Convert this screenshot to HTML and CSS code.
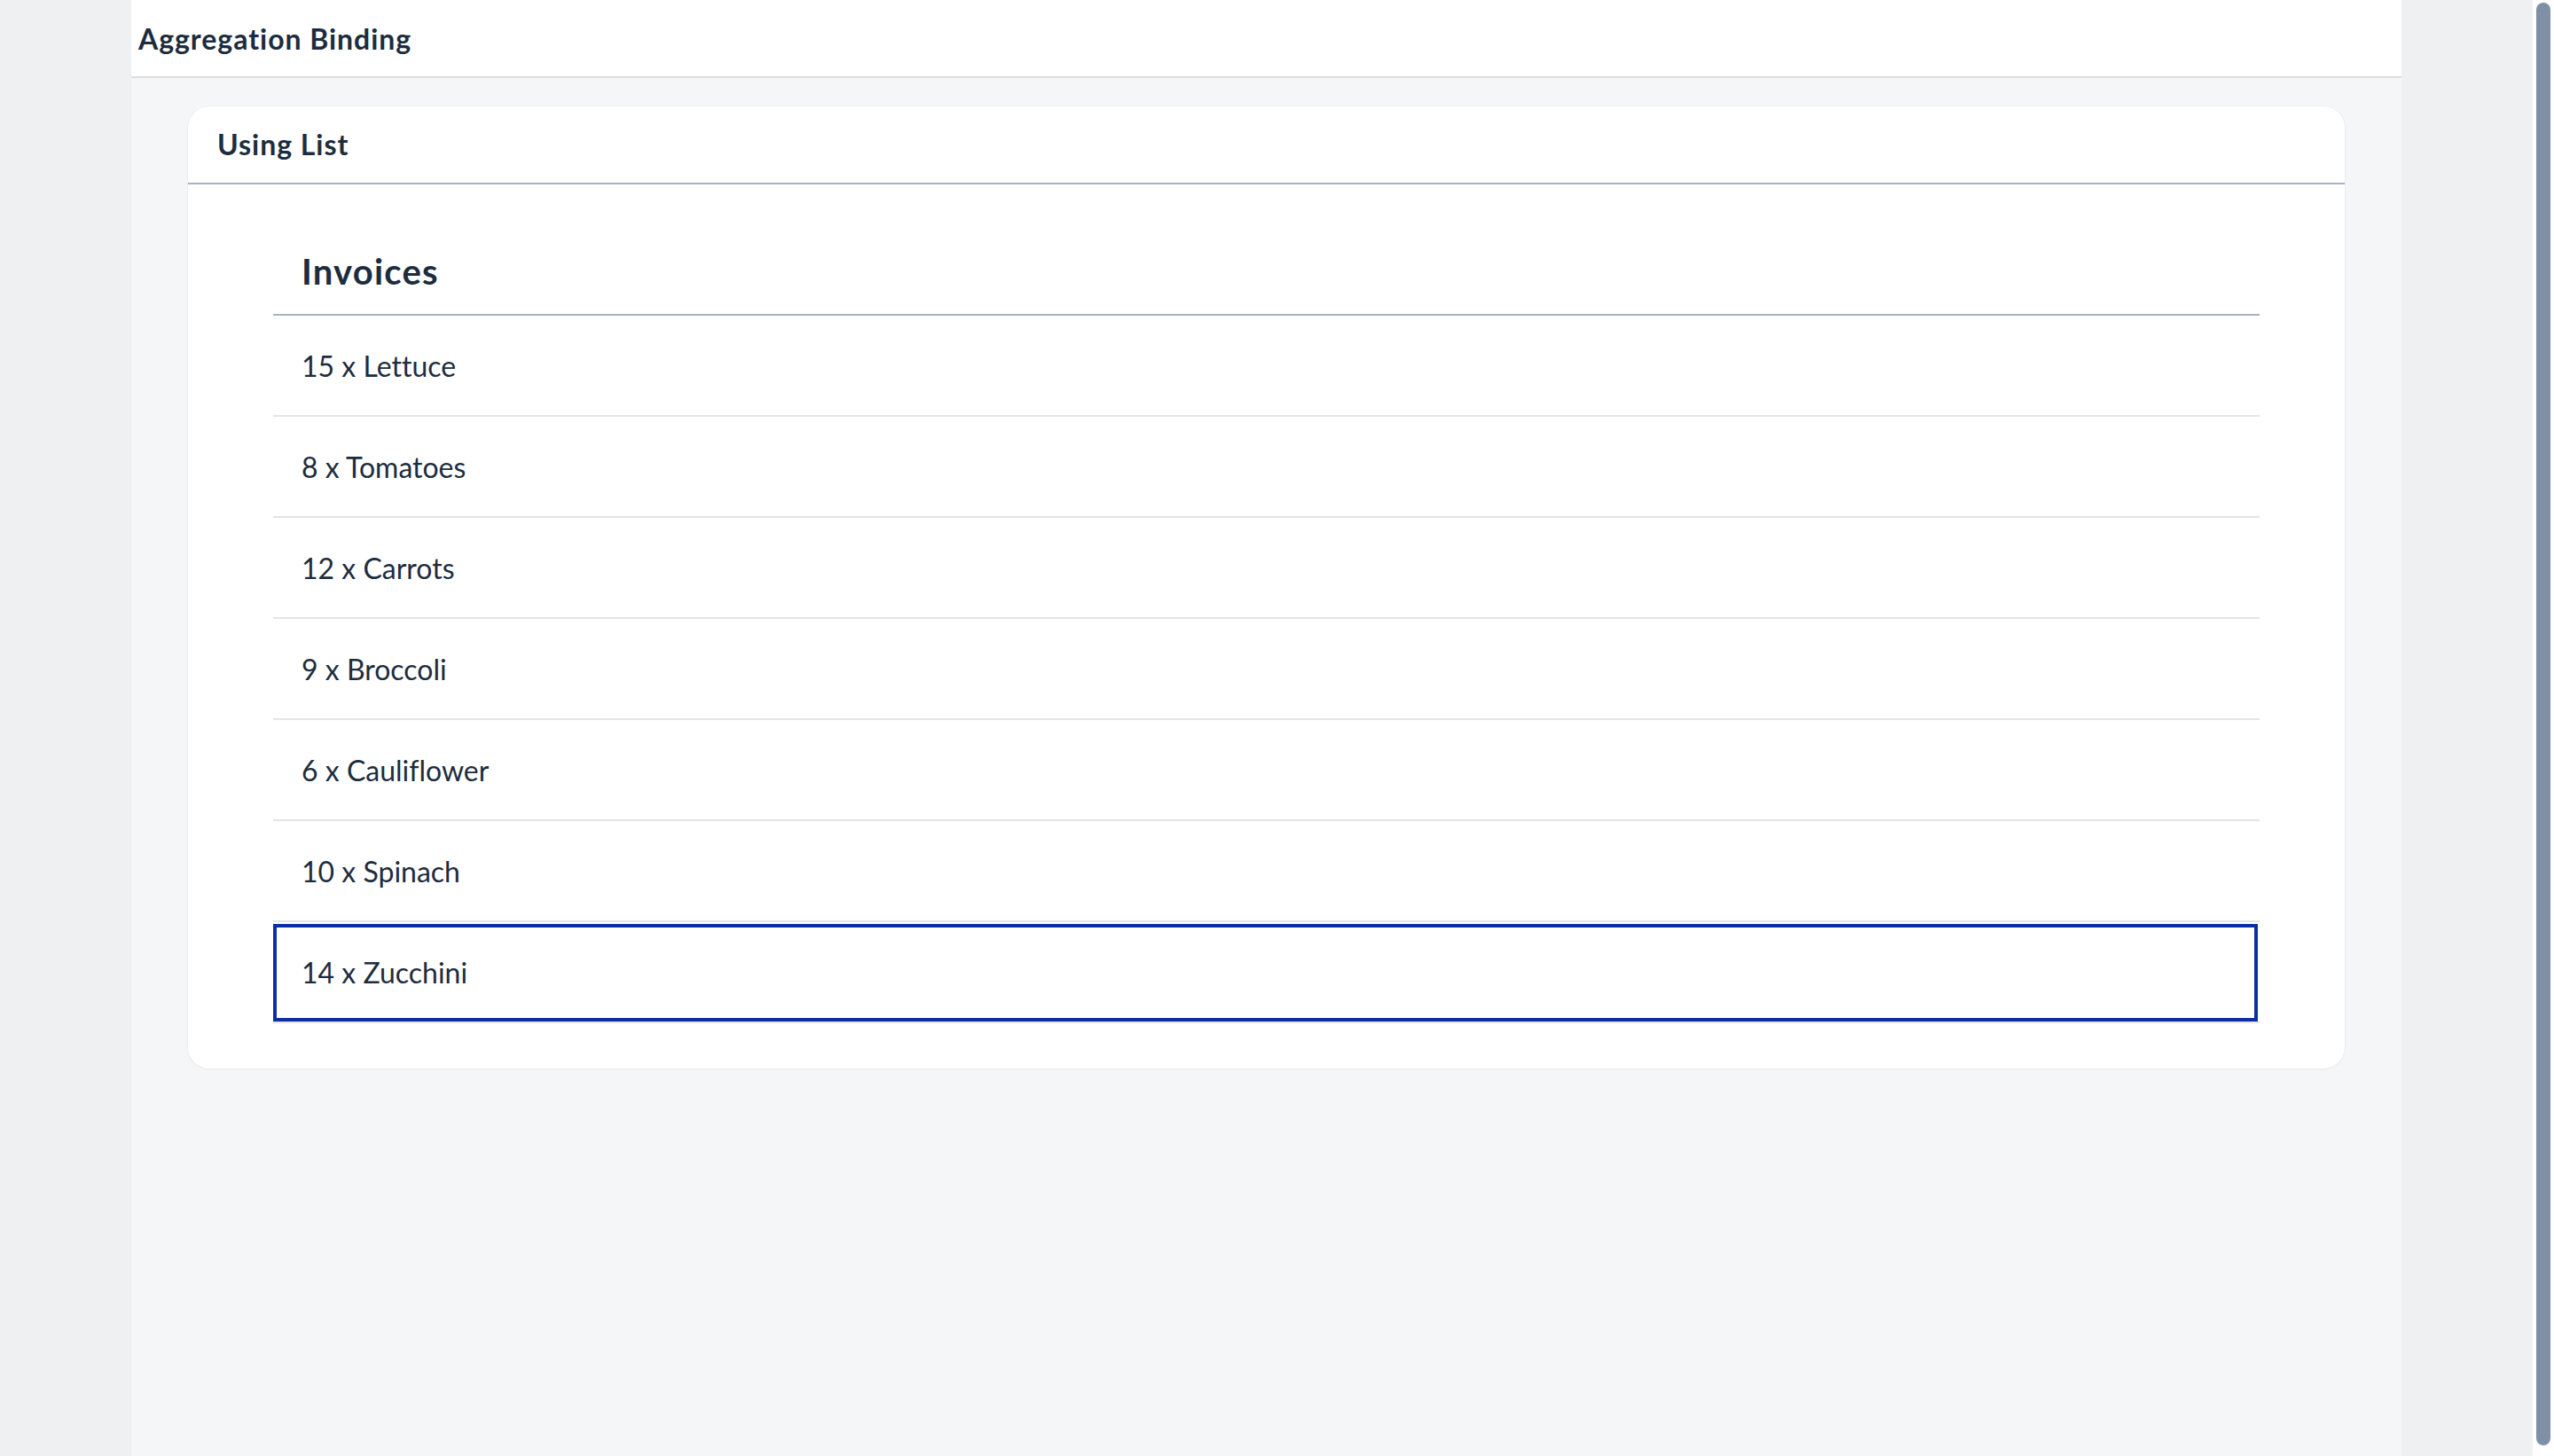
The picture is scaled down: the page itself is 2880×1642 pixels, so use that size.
FILE: index.html
```html
<!DOCTYPE html>
<html lang="en">
<head>
<meta charset="utf-8">
<title>Aggregation Binding</title>
<link rel="stylesheet" href="styles.css">
</head>
<body>
<div class="app">
  <div class="viewport">
    <div class="shell">
      <header class="page-header">
        <h1 class="page-title">Aggregation Binding</h1>
      </header>
      <main class="page-content">
        <section class="panel">
          <div class="panel-header">
            <h2 class="panel-title">Using List</h2>
          </div>
          <div class="panel-body">
            <div class="list">
              <div class="list-header">Invoices</div>
              <ul class="list-items">
                <li class="list-item">15 x Lettuce</li>
                <li class="list-item">8 x Tomatoes</li>
                <li class="list-item">12 x Carrots</li>
                <li class="list-item">9 x Broccoli</li>
                <li class="list-item">6 x Cauliflower</li>
                <li class="list-item">10 x Spinach</li>
                <li class="list-item is-focused">14 x Zucchini</li>
              </ul>
            </div>
          </div>
        </section>
      </main>
    </div>
  </div>
  <div class="scrollbar"><div class="scrollbar-thumb"></div></div>
</div>
</body>
</html>
```

FILE: styles.css
```css
html, body {
  margin: 0;
  height: 100%;
  overflow: hidden;
}
body {
  font-family: Lato, "Liberation Sans", Arial, sans-serif;
  font-variant-ligatures: none;
  color: #1d2d3e;
  background: #eef0f2;
}
.app {
  display: flex;
  height: 1642px;
}
.viewport {
  flex: 1;
  display: flex;
  justify-content: center;
  background: #eef0f2;
}
.scrollbar {
  width: 24px;
  background: #ffffff;
  padding: 3px 4px 12px 4px;
  box-sizing: border-box;
  display: flex;
}
.scrollbar-thumb {
  flex: 1;
  background: #7f8fa6;
  border-radius: 8px;
}
.shell {
  width: 2560px;
  height: 100%;
  background: #f5f6f7;
  display: flex;
  flex-direction: column;
}
.page-header {
  height: 86px;
  background: #ffffff;
  border-bottom: 2px solid #dcdee0;
  display: flex;
  align-items: center;
  padding-left: 8px;
  padding-top: 2px;
  box-sizing: border-box;
  height: 88px;
}
.page-title {
  margin: 0;
  font-size: 32px;
  font-weight: 700;
  line-height: 1;
  letter-spacing: 0.03em;
}
.page-content {
  padding: 32px 64px;
}
.panel {
  background: #ffffff;
  border-radius: 24px;
  box-shadow: 0 0 0 1px rgba(34, 53, 72, 0.03), 0 1px 3px rgba(34, 53, 72, 0.04);
  overflow: hidden;
}
.panel-header {
  height: 86px;
  border-bottom: 2px solid #a8b3bd;
  display: flex;
  align-items: center;
  padding-left: 33px;
}
.panel-title {
  margin: 0;
  font-size: 32px;
  font-weight: 700;
  line-height: 1;
  letter-spacing: 0.03em;
}
.panel-body {
  padding: 50px 96px 51px 96px;
}
.list-header {
  height: 96px;
  border-bottom: 2px solid #a8b3bd;
  display: flex;
  align-items: center;
  padding-left: 32px;
  font-size: 40px;
  font-weight: 700;
  letter-spacing: 0.03em;
}
.list-items {
  list-style: none;
  margin: 0;
  padding: 0;
}
.list-item {
  position: relative;
  height: 112px;
  border-bottom: 2px solid #e5e5e5;
  display: flex;
  align-items: center;
  padding-left: 32px;
  font-size: 32px;
}
.list-item.is-focused::after {
  content: "";
  position: absolute;
  top: 2px;
  left: 0;
  right: 2px;
  bottom: 0;
  border: 4px solid #0b2fa3;
  pointer-events: none;
}
```
